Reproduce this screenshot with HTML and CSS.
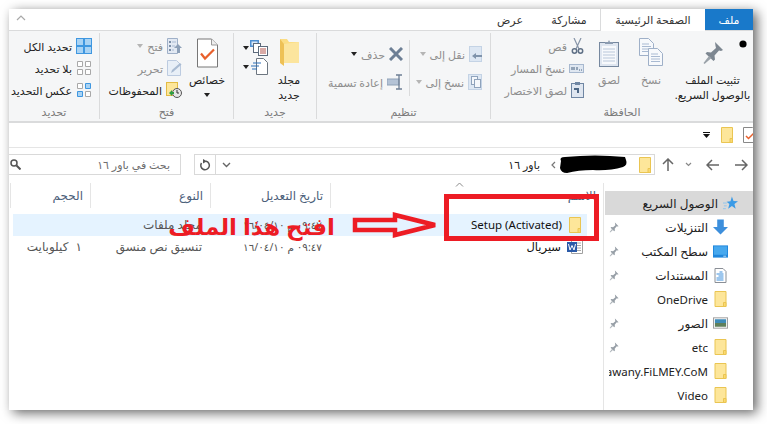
FILE: index.html
```html
<!DOCTYPE html>
<html lang="ar" dir="rtl">
<head>
    <meta charset="UTF-8">
    <title>باور ١٦</title>
    <link rel="stylesheet" href="styles.css">
</head>
<body>
    <svg class="defs" width="0" height="0">
        <symbol id="folder" viewBox="0 0 12 16">
            <path d="M.5.5h11v15H.5z" fill="#fde69a" stroke="#eac552"/>
            <path d="M9 11.5h2.5v4H9z" fill="#fbd96f" stroke="#eac552"/>
        </symbol>
        <symbol id="pin" viewBox="0 0 22 24">
            <path d="M13 1l8 8-2 1-2-.5-4.500 5 .5 4-1.500 1.500L3.500 12.500 5 11l4 .5 5-4.500-.5-2z" fill="#7d8791"/>
            <path d="M7 15l-5.500 7 1 1L9.500 17z" fill="#9aa2a9"/>
        </symbol>
        <symbol id="sheet" viewBox="0 0 15 18">
            <path d="M.5.5h9l5 5v12H.5z" fill="#f7f9fc" stroke="#9fb0c8"/>
            <path d="M3 6h7M3 8.500h9M3 11h9M3 13.500h9" stroke="#a9bad2"/>
        </symbol>
    </svg>

    <div class="window">
        <nav class="tabs">
            <div class="tab tab-file">ملف</div>
            <div class="tab tab-home">الصفحة الرئيسية</div>
            <div class="tab tab-share">مشاركة</div>
            <div class="tab tab-view">عرض</div>
            <svg class="collapse" width="10" height="6" viewBox="0 0 10 6"><path d="M1 5l4-4 4 4" fill="none" stroke="#a9a9a9" stroke-width="1.200"/></svg>
        </nav>

        <section class="ribbon">
            <div class="group group-clip">
                <div class="group-body">
                    <div class="big big-pin">
                        <svg class="big-icon" width="22" height="24"><use href="#pin"/></svg>
                        <span>تثبيت الملف</span>
                        <span>بالوصول السريع.</span>
                    </div>
                    <div class="big big-narrow off">
                        <svg class="big-icon" width="24" height="30" viewBox="0 0 24 30">
                            <use href="#sheet" width="15" height="18" x="0" y="0"/>
                            <use href="#sheet" width="15" height="18" x="9" y="10"/>
                        </svg>
                        <span>نسخ</span>
                    </div>
                    <div class="big big-narrow off">
                        <svg class="big-icon" width="20" height="28" viewBox="0 0 20 28">
                            <rect x=".5" y="3.500" width="19" height="24" fill="#dfe6f0" stroke="#76889f"/>
                            <rect x="3" y="7" width="14" height="18" fill="#f7f9fc"/>
                            <path d="M4 10h12M4 13h12M4 16h12M4 19h12M4 22h12" stroke="#b9c7da"/>
                            <path d="M6 5V3h3l1-2 1 2h3v2z" fill="#8b9bb0"/>
                        </svg>
                        <span>لصق</span>
                    </div>
                    <div class="small-col small-clip off">
                        <div class="small">
                            <svg width="13" height="16" viewBox="0 0 13 16"><path d="M3 0l5 11M10 0L5 11" stroke="#8795a8" stroke-width="1.200"/><circle cx="3.500" cy="13" r="2.200" fill="none" stroke="#5f7086" stroke-width="1.500"/><circle cx="9.500" cy="13" r="2.200" fill="none" stroke="#5f7086" stroke-width="1.500"/></svg>
                            <span>قص</span>
                        </div>
                        <div class="small">
                            <svg width="15" height="9" viewBox="0 0 15 9"><rect x=".5" y=".5" width="14" height="8" fill="#dfe7f1" stroke="#a7b8cf"/><path d="M3 3v3M5 3v3M8 3v3" stroke="#46607f"/><path d="M10 6h3" stroke="#46607f" stroke-dasharray="1 1"/></svg>
                            <span>نسخ المسار</span>
                        </div>
                        <div class="small">
                            <svg width="13" height="16" viewBox="0 0 13 16"><rect x=".5" y="1.500" width="12" height="14" fill="#dfe6f0" stroke="#6f86a3"/><path d="M4 0h5v3H4z" fill="#6f86a3"/><path d="M3 6h5v5H6V8H3z" fill="#4d6785"/></svg>
                            <span>لصق الاختصار</span>
                        </div>
                    </div>
                </div>
                <div class="group-label">الحافظة</div>
            </div>

            <div class="group group-org">
                <div class="group-body">
                    <div class="org-part org-move off">
                        <div class="org-row">
                            <svg width="13" height="16" viewBox="0 0 13 16"><rect x=".5" y=".5" width="12" height="15" fill="#dde7f3" stroke="#c4d3e5"/><path d="M13 9H7V7L3 10l4 3v-2h6z" fill="#7f93ab"/></svg>
                            <span>نقل إلى</span><i class="caret caret-off"></i>
                        </div>
                        <div class="org-row">
                            <svg width="14" height="16" viewBox="0 0 14 16"><rect x=".5" y=".5" width="13" height="15" fill="#dde7f3" stroke="#c4d3e5"/><rect x="3.500" y="2.500" width="6" height="8" fill="#f4f7fb" stroke="#8fa3bc"/><rect x="6.500" y="5.500" width="6" height="8" fill="#f4f7fb" stroke="#8fa3bc"/></svg>
                            <span>نسخ إلى</span><i class="caret caret-off"></i>
                        </div>
                    </div>
                    <div class="org-part org-del">
                        <div class="org-row">
                            <svg width="14" height="14" viewBox="0 0 14 14"><path d="M1 1l12 12M13 1L1 13" stroke="#6d7f95" stroke-width="3"/></svg>
                            <span class="dim">حذف</span><i class="caret"></i>
                        </div>
                        <div class="org-row">
                            <svg width="16" height="16" viewBox="0 0 16 16"><rect x="0" y="5" width="12" height="6" fill="#b4c3d6" stroke="#8fa1b7"/><path d="M12 1v14M9 1h6M9 15h6" stroke="#6d7f95" stroke-width="1.300" fill="none"/></svg>
                            <span class="dim">إعادة تسمية</span>
                        </div>
                    </div>
                </div>
                <div class="group-label">تنظيم</div>
            </div>

            <div class="group group-new">
                <div class="group-body">
                    <div class="big big-folder">
                        <svg class="big-icon" width="19" height="28" viewBox="0 0 19 28">
                            <path d="M0 0h7l2 3h10v21H4z" fill="#fbdd84"/>
                            <path d="M0 0l4 5v22l-4-3z" fill="#eec156"/>
                            <path d="M4 5l15-2v21H4z" fill="#fce59e"/>
                        </svg>
                        <span>مجلد</span>
                        <span>جديد</span>
                    </div>
                    <div class="small-col small-new">
                        <div class="small">
                            <svg width="18" height="16" viewBox="0 0 18 16"><rect x="0" y="0" width="9" height="7" fill="#4e8fd0"/><rect x="1.500" y="1.500" width="6" height="4" fill="#d7e8f8"/><rect x="3.500" y="3.500" width="7" height="9" fill="#fff" stroke="#5c6a7b"/><rect x="8.500" y="6.500" width="9" height="9" fill="#fff" stroke="#5c6a7b"/><path d="M10 9h6M10 11h6M10 13h6" stroke="#b4564f"/></svg>
                            <i class="caret"></i>
                        </div>
                        <div class="small">
                            <svg width="18" height="17" viewBox="0 0 18 17"><path d="M6.500.5h7l4 4v12h-11z" fill="#fff" stroke="#6d7680"/><path d="M3 5h8M1 8h8M2 11h5" stroke="#2a6fb8" stroke-width="1.200"/></svg>
                            <i class="caret"></i>
                        </div>
                    </div>
                </div>
                <div class="group-label">جديد</div>
            </div>

            <div class="group group-open">
                <div class="group-body">
                    <div class="big big-props">
                        <svg class="big-icon" width="21" height="29" viewBox="0 0 21 29">
                            <path d="M.5.500h14l6 6v22H.5z" fill="#fff" stroke="#777"/>
                            <path d="M14.500.5v6h6" fill="#eee" stroke="#999"/>
                            <path d="M4 15l4 5 9-9" fill="none" stroke="#e8602c" stroke-width="2.200"/>
                        </svg>
                        <span>خصائص</span>
                        <i class="caret caret-below"></i>
                    </div>
                    <div class="small-col small-open">
                        <div class="small off">
                            <svg width="15" height="16" viewBox="0 0 15 16"><path d="M.5.5h10v15H.5z" fill="#e2e9f3" stroke="#9fb0c8"/><path d="M2 3h2v2H2zM2 7h2v2H2zM2 11h2v2H2z" fill="#7c8fa8"/><path d="M5 4h4M5 8h3M5 12h2" stroke="#a9bad2"/><path d="M11 6l4 4h-2v5h-3v-5H7z" fill="#8da0b8"/></svg>
                            <span>فتح</span><i class="caret caret-off"></i>
                        </div>
                        <div class="small off">
                            <svg width="15" height="16" viewBox="0 0 15 16"><path d="M.5.5h9l4 4v11H.5z" fill="#e8eff7" stroke="#bccbe0"/><path d="M4 13l1-3 8-7 1.500 1.500-8 7z" fill="#a9bbd2"/></svg>
                            <span>تحرير</span>
                        </div>
                        <div class="small">
                            <svg width="16" height="16" viewBox="0 0 16 16"><rect x=".5" y=".5" width="11" height="13" fill="#fde69a" stroke="#e2bb44"/><circle cx="11" cy="11" r="4.500" fill="#e6e6e6" stroke="#555"/><path d="M11 8v3h2" fill="none" stroke="#333"/><path d="M3 11l3-3v2h2v2H6v2z" fill="#2f9e44"/></svg>
                            <span>المحفوظات</span>
                        </div>
                    </div>
                </div>
                <div class="group-label">فتح</div>
            </div>

            <div class="group group-select">
                <div class="group-body">
                    <div class="small-col small-select">
                        <div class="small">
                            <svg width="16" height="16" viewBox="0 0 16 16"><path d="M0 0h16v16H0z" fill="#3f97e0"/><path d="M1 1h6v6H1zM9 1h6v6H9zM1 9h6v6H1zM9 9h6v6H9z" fill="#a9d3f4"/></svg>
                            <span>تحديد الكل</span>
                        </div>
                        <div class="small">
                            <svg width="16" height="16" viewBox="0 0 16 16"><path d="M1.500 1.500h5v5h-5zM9.500 1.500h5v5h-5zM1.500 9.500h5v5h-5zM9.500 9.500h5v5h-5z" fill="#fff" stroke="#a8a8a8"/></svg>
                            <span>بلا تحديد</span>
                        </div>
                        <div class="small">
                            <svg width="16" height="16" viewBox="0 0 16 16"><path d="M1.500 1.500h5v5h-5zM9.500 9.500h5v5h-5z" fill="#fff" stroke="#a8a8a8"/><path d="M9.500 1.500h5v5h-5zM1.500 9.500h5v5h-5z" fill="#a9d3f4" stroke="#3f97e0"/></svg>
                            <span>عكس التحديد</span>
                        </div>
                    </div>
                </div>
                <div class="group-label">تحديد</div>
            </div>
        </section>

        <div class="qat">
            <svg class="qat-props" width="14" height="16" viewBox="0 0 14 16"><path d="M.5.5h9l4 4v11H.5z" fill="#fff" stroke="#888"/><path d="M3 9l2.500 2.500L11 6" fill="none" stroke="#e8602c" stroke-width="1.500"/></svg>
            <svg class="qat-folder" width="12" height="16"><use href="#folder"/></svg>
            <svg class="qat-more" width="7" height="6" viewBox="0 0 7 6"><path d="M0 0h7v1H0zM0 2h7L3.500 6z" fill="#111"/></svg>
        </div>

        <div class="navbar">
            <button class="nav-btn nav-fwd"><svg width="13" height="12" viewBox="0 0 13 12"><path d="M0 6h12M7 1l5 5-5 5" fill="none" stroke="#666" stroke-width="1.500"/></svg></button>
            <button class="nav-btn nav-back"><svg width="13" height="12" viewBox="0 0 13 12"><path d="M13 6H1M6 1L1 6l5 5" fill="none" stroke="#666" stroke-width="1.500"/></svg></button>
            <button class="nav-btn nav-hist"><svg width="7" height="5" viewBox="0 0 7 5"><path d="M1 1l2.500 2.500L6 1" fill="none" stroke="#888" stroke-width="1.200"/></svg></button>
            <button class="nav-btn nav-up"><svg width="12" height="13" viewBox="0 0 12 13"><path d="M6 13V1M1 6l5-5 5 5" fill="none" stroke="#666" stroke-width="1.500"/></svg></button>

            <div class="address">
                <svg class="addr-folder" width="12" height="16"><use href="#folder"/></svg>
                <span class="addr-hidden"></span>
                <svg class="addr-sep" width="5" height="8" viewBox="0 0 5 8"><path d="M4 1L1 4l3 3" fill="none" stroke="#777" stroke-width="1.200"/></svg>
                <span class="addr-text">باور ١٦</span>
                <span class="addr-drop"><svg width="9" height="6" viewBox="0 0 9 6"><path d="M1 1l3.500 3.500L8 1" fill="none" stroke="#666" stroke-width="1.400"/></svg></span>
                <span class="addr-refresh"><svg width="12" height="12" viewBox="0 0 12 12"><path d="M7 2.200a4.300 4.300 0 1 1-4.500 1.800" fill="none" stroke="#555" stroke-width="1.500"/><path d="M4 0l4 2.200L4 4.500z" fill="#555"/></svg></span>
            </div>

            <div class="search">
                <span>بحث في باور ١٦</span>
                <svg width="11" height="11" viewBox="0 0 11 11"><circle cx="4" cy="4" r="3" fill="none" stroke="#555" stroke-width="1.500"/><path d="M6.500 6.500L10.500 10.500" stroke="#555" stroke-width="2"/></svg>
            </div>
        </div>

        <div class="content">
            <aside class="sidebar">
                <div class="side-row side-active">
                    <svg width="16" height="15" viewBox="0 0 16 15"><path d="M9.500 0l1.700 4.700 4.800.3-3.800 3 1.300 5-4-2.800-4 2.800 1.300-5-3-2.400 4.200-.6z" fill="#3b9be6"/><path d="M0 7h4M1 10h3M0 13h3" stroke="#8fc4ee"/></svg>
                    <span class="side-name">الوصول السريع</span>
                </div>
                <div class="side-row">
                    <svg width="16" height="16" viewBox="0 0 16 16"><path d="M4.500 0h7v8H16l-8 8-8-8h4.500z" fill="#3d8fdc"/></svg>
                    <span class="side-name">التنزيلات</span>
                    <svg class="side-pin" width="10" height="11"><use href="#pin"/></svg>
                </div>
                <div class="side-row">
                    <svg width="16" height="13" viewBox="0 0 16 13"><rect width="16" height="13" fill="#1f86dc"/><rect x="1" y="1" width="14" height="9" fill="#46a8ee"/><path d="M11 11.500h3" stroke="#bfe0f8"/></svg>
                    <span class="side-name">سطح المكتب</span>
                    <svg class="side-pin" width="10" height="11"><use href="#pin"/></svg>
                </div>
                <div class="side-row">
                    <svg width="12" height="15" viewBox="0 0 12 15"><path d="M.5.5h8l3 3v11H.5z" fill="#fff" stroke="#8a8f96"/><path d="M5 4h3M2 6h7M4 8h5M2 10h7M2 12h7" stroke="#3d8fdc"/></svg>
                    <span class="side-name">المستندات</span>
                    <svg class="side-pin" width="10" height="11"><use href="#pin"/></svg>
                </div>
                <div class="side-row">
                    <svg width="13" height="16"><use href="#folder"/></svg>
                    <span class="side-name side-latin">OneDrive</span>
                    <svg class="side-pin" width="10" height="11"><use href="#pin"/></svg>
                </div>
                <div class="side-row">
                    <svg width="16" height="12" viewBox="0 0 16 12"><rect x=".5" y=".5" width="15" height="11" fill="#fff" stroke="#9a9a9a"/><rect x="2" y="2" width="12" height="4" fill="#3e8bb8"/><rect x="2" y="6" width="12" height="4" fill="#5f7f5a"/></svg>
                    <span class="side-name">الصور</span>
                    <svg class="side-pin" width="10" height="11"><use href="#pin"/></svg>
                </div>
                <div class="side-row">
                    <svg width="13" height="16"><use href="#folder"/></svg>
                    <span class="side-name side-latin">etc</span>
                    <svg class="side-pin" width="10" height="11"><use href="#pin"/></svg>
                </div>
                <div class="side-row">
                    <svg width="13" height="16"><use href="#folder"/></svg>
                    <span class="side-name side-latin">awany.FiLMEY.CoM</span>
                </div>
                <div class="side-row">
                    <svg width="13" height="16"><use href="#folder"/></svg>
                    <span class="side-name side-latin">Video</span>
                </div>
            </aside>

            <main class="files">
                <div class="file-head">
                    <div class="col-head">الاسم</div>
                    <div class="col-head">تاريخ التعديل</div>
                    <div class="col-head">النوع</div>
                    <div class="col-head">الحجم</div>
                </div>
                <div class="file-row file-row-sel">
                    <div class="file-name">
                        <svg width="12" height="16"><use href="#folder"/></svg>
                        <bdi>Setup (Activated)</bdi>
                    </div>
                    <div class="file-date">٠٩:٤٧ م ١٦/٠٤/١٠</div>
                    <div>مجلد ملفات</div>
                    <div></div>
                </div>
                <div class="file-row">
                    <div class="file-name file-doc">
                        <svg width="16" height="14" viewBox="0 0 16 14"><path d="M4.500.5h11v13h-11z" fill="#fff" stroke="#a0a0a0"/><path d="M10 3h4M10 5.500h4M10 8h4M10 10.500h4" stroke="#a8a8a8"/><rect y="2" width="10" height="10" fill="#2b5aa8"/><path d="M1.500 4l1.500 6 2-4.500 2 4.500 1.500-6" fill="none" stroke="#fff"/></svg>
                        <span>سيريال</span>
                    </div>
                    <div class="file-date">٠٩:٤٧ م ١٦/٠٤/١٠</div>
                    <div>تنسيق نص منسق</div>
                    <div class="file-size">١ كيلوبايت</div>
                </div>
            </main>
        </div>

        <svg class="sort-caret" width="9" height="5" viewBox="0 0 9 5"><path d="M1 4.500l3.500-3.500L8 4.500" fill="none" stroke="#8a8a8a"/></svg>

        <svg class="marks" width="744" height="401" viewBox="0 0 744 401">
            <circle cx="734" cy="35" r="3.600" fill="#000"/>
            <path d="M552 152q-2-4 4-4 30-3 60 0l1 3q2 5-3 7-14 4-30 3-15 0-26 3-6 0-7-5z" fill="#000"/>
            <rect x="437.500" y="187.500" width="150" height="42" fill="none" stroke="#ed1c24" stroke-width="5"/>
            <path d="M346 211h40v-5l40 10-40 10v-5h-40z" fill="none" stroke="#ed1c24" stroke-width="4.500"/>
        </svg>
        <div class="note">افتح هذا الملف</div>
    </div>
</body>
</html>
```

FILE: styles.css
```css
html {
    overflow: hidden;
}
body {
    margin: 0;
    padding: 0;
    background: #fff;
    font-family: "Noto Sans", "DejaVu Sans", sans-serif;
    font-size: 12px;
    color: #222;
}
/* drop shadow behind the window */
body::before {
    content: "";
    position: absolute;
    left: 9px;
    top: 9px;
    width: 744px;
    height: 401px;
    box-shadow: 4px 3px 11px rgba(0,0,0,0.6);
}
svg {
    display: block;
    flex: none;
}
.defs {
    position: absolute;
}
.window {
    position: relative;
    margin: 9px 14px 0 9px;
    height: 401px;
    background: #fff;
    overflow: hidden;
}

/* tabs */
.tabs {
    display: flex;
    height: 21px;
    border-bottom: 1px solid #dadbdc;
    position: relative;
}
.tab {
    height: 21px;
    line-height: 21px;
    text-align: center;
    font-size: 11px;
    color: #333;
}
.tab-file {
    width: 48px;
    background: #1979ca;
    color: #fff;
}
.tab-home {
    width: 105px;
    height: 22px;
    background: #fff;
    border-left: 1px solid #dadbdc;
    box-sizing: border-box;
    position: relative;
    z-index: 1;
}
.tab-share {
    width: 62px;
}
.tab-view {
    width: 56px;
}
.collapse {
    position: absolute;
    left: 7px;
    top: 6px;
}

/* ribbon */
.ribbon {
    display: flex;
    height: 86px;
    padding: 2px 0;
    background: #f5f6f7;
    border-bottom: 2px solid #dadbdc;
    overflow: hidden;
}
.group {
    display: flex;
    flex-direction: column;
    height: 86px;
    box-sizing: border-box;
    border-left: 1px solid #dadbdc;
}
.group:last-child {
    border-left: none;
}
.group-clip { width: 263px; }
.group-org { width: 174px; }
.group-new { width: 83px; }
.group-open { width: 134px; }
.group-select { width: 90px; }
.group-body {
    display: flex;
    flex: 1;
    min-height: 0;
}
.group-label {
    height: 13px;
    line-height: 13px;
    margin-bottom: 1px;
    text-align: center;
    font-size: 11px;
    color: #7b7b7b;
}
.big {
    display: flex;
    flex-direction: column;
    align-items: center;
    box-sizing: border-box;
    padding-top: 5px;
    line-height: 15px;
    font-size: 11px;
    white-space: nowrap;
}
.big-icon {
    margin-bottom: 4px;
    height: 30px;
}
.big-pin {
    width: 81px;
    color: #222;
}
.big-narrow {
    width: 42px;
}
.big-folder {
    width: 48px;
    padding-right: 6px;
}
.big-props {
    width: 48px;
    padding-right: 4px;
}
.off {
    color: #8e8e8e;
}
.dim {
    color: #8e8e8e;
}
.small-col {
    display: flex;
    flex-direction: column;
    padding-top: 2px;
}
.small {
    display: flex;
    align-items: center;
    gap: 4px;
    height: 22px;
    font-size: 11px;
    white-space: nowrap;
}
.small-clip { padding-right: 4px; }
.small-new { padding-top: 5px; gap: 0; }
.small-new .small { height: 19px; gap: 1px; }
.small-open { padding-right: 3px; }
.small-select { padding-right: 7px; }
.org-part {
    display: flex;
    flex-direction: column;
    padding-top: 7px;
}
.org-move {
    width: 81px;
    box-sizing: border-box;
    padding-right: 8px;
    height: 56px;
    margin-top: 7px;
    padding-top: 0;
    border-left: 1px solid #dadbdc;
}
.org-del {
    padding-right: 6px;
}
.org-row {
    display: flex;
    align-items: center;
    gap: 4px;
    height: 28px;
    font-size: 11px;
    white-space: nowrap;
}
.caret {
    display: block;
    width: 0;
    height: 0;
    border-top: 4px solid #222;
    border-left: 3.500px solid transparent;
    border-right: 3.500px solid transparent;
}
.caret-off {
    border-top-color: #b5b5b5;
}
.caret-below {
    margin-top: 6px;
}

/* quick access */
.qat {
    display: flex;
    align-items: center;
    height: 24px;
    border-bottom: 1px solid #e5e5e5;
    overflow: hidden;
}
.qat-props {
    margin-right: -4px;
}
.qat-folder {
    margin-right: 10px;
}
.qat-more {
    margin-right: 11px;
}

/* address bar */
.navbar {
    display: flex;
    height: 21px;
    padding: 6px 0 8px;
}
.nav-btn {
    display: flex;
    align-items: center;
    justify-content: center;
    padding: 0;
    border: none;
    background: none;
}
.nav-fwd { width: 24px; }
.nav-back { width: 34px; }
.nav-hist { width: 14px; }
.nav-up { width: 26px; }
.address {
    display: flex;
    align-items: center;
    width: 461px;
    box-sizing: border-box;
    border: 1px solid #d9d9d9;
    padding-right: 3px;
}
.addr-hidden {
    width: 66px;
    margin-right: 12px;
}
.addr-sep {
    margin-right: 5px;
}
.addr-text {
    flex: 1;
    margin-right: 11px;
    font-size: 11px;
}
.addr-drop {
    width: 20px;
    display: flex;
    justify-content: center;
}
.addr-refresh {
    width: 20px;
    height: 100%;
    display: flex;
    align-items: center;
    justify-content: center;
    border-right: 1px solid #d9d9d9;
}
.search {
    display: flex;
    align-items: center;
    justify-content: space-between;
    width: 172px;
    box-sizing: border-box;
    margin-right: 13px;
    padding: 0 10px 0 1px;
    border: 1px solid #d9d9d9;
    border-left: none;
    font-size: 11px;
    color: #6d6d6d;
}

/* content */
.content {
    display: flex;
    height: 227px;
}
.sidebar {
    width: 150px;
    flex: none;
    box-sizing: border-box;
    padding-top: 8px;
    border-left: 1px solid #e5e5e5;
    overflow: hidden;
}
.side-row {
    display: flex;
    align-items: center;
    height: 24px;
    padding: 0 25px 0 4px;
    margin-left: 1px;
    gap: 5px;
}
.side-row > svg:first-child {
    width: 15px;
}
.side-active {
    background: #d9d9d9;
    padding-right: 15px;
}
.side-name {
    flex: 1;
    min-width: 0;
    overflow: hidden;
    white-space: nowrap;
    font-size: 12px;
}
.side-latin {
    font-size: 11.500px;
}
.side-pin {
    opacity: 0.8;
}
.files {
    flex: 1;
    min-width: 0;
}
.file-head, .file-row {
    display: grid;
    grid-template-columns: 273px 120px 120px 80px;
}
.file-head {
    height: 25px;
}
.col-head {
    line-height: 25px;
    padding-right: 7px;
    border-left: 1px solid #e5e5e5;
    color: #4c607a;
    font-size: 12px;
}
.file-row {
    height: 22px;
    line-height: 22px;
    margin: 0 16px 0 4px;
    grid-template-columns: 257px 120px 120px 77px;
    color: #555;
    font-size: 12px;
}
.file-head + .file-row {
    margin-top: 6px;
}
.file-row > div:not(.file-name) {
    padding-right: 8px;
    white-space: nowrap;
}
.file-row-sel {
    background: #e5f3ff;
}
.file-name {
    display: flex;
    align-items: center;
    gap: 7px;
    color: #111;
    font-size: 11.500px;
    padding-right: 6px;
}
.file-doc svg {
    margin: 0 -2px 0 -1px;
}
.file-date {
    font-size: 10.500px;
}
.file-size {
    letter-spacing: 0.900px;
    word-spacing: 4px;
}

/* annotations drawn on top of the screenshot */
.sort-caret {
    position: absolute;
    left: 446px;
    top: 173px;
}
.marks {
    position: absolute;
    left: 0;
    top: 0;
}
.note {
    position: absolute;
    left: 168px;
    top: 202px;
    width: 158px;
    text-align: center;
    font-size: 23px;
    font-weight: bold;
    line-height: 30px;
    color: #ed1c24;
    white-space: nowrap;
}
```
